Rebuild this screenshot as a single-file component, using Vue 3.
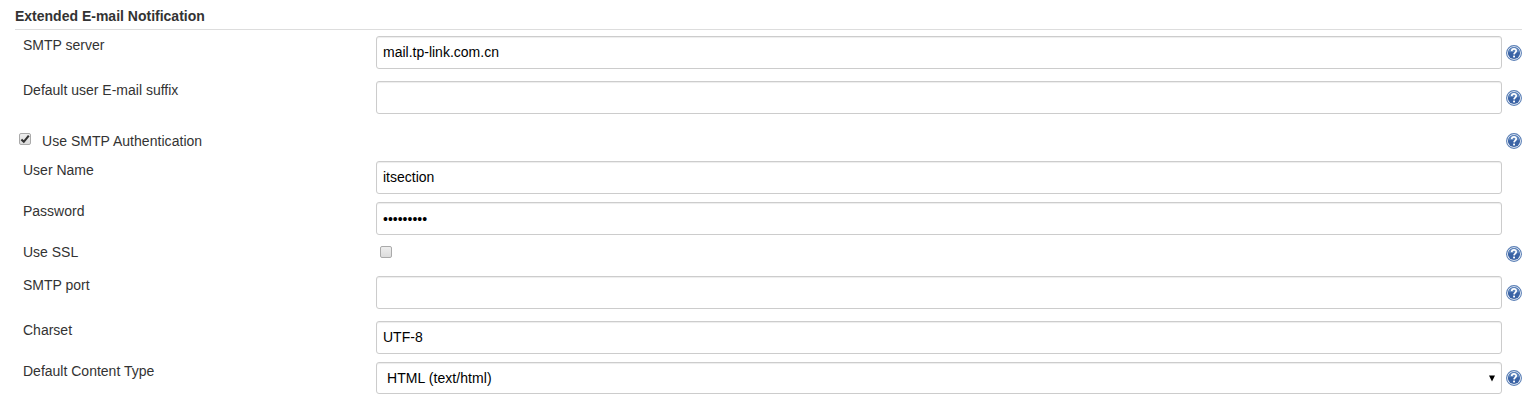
<script setup>
import { reactive } from 'vue'

const rows = reactive([
  { id: 'server', label: 'SMTP server', kind: 'text', value: 'mail.tp-link.com.cn', help: true, size: 'tall' },
  { id: 'suffix', label: 'Default user E-mail suffix', kind: 'text', value: '', help: true, size: 'tall' },
  { id: 'auth', label: 'Use SMTP Authentication', kind: 'inline', value: true, help: true, size: 'auth' },
  { id: 'user', label: 'User Name', kind: 'text', value: 'itsection', size: 'mid' },
  { id: 'password', label: 'Password', kind: 'password', value: '•••••••••', size: 'mid' },
  { id: 'ssl', label: 'Use SSL', kind: 'check', value: false, help: true, size: 'short' },
  { id: 'port', label: 'SMTP port', kind: 'text', value: '', help: true, size: 'tall' },
  { id: 'charset', label: 'Charset', kind: 'text', value: 'UTF-8', size: 'mid' },
  { id: 'type', label: 'Default Content Type', kind: 'select', value: 'HTML (text/html)', help: true, size: 'last' },
])
</script>

<template>
  <main class="section">
    <h1 class="title">Extended E-mail Notification</h1>
    <div v-for="row in rows" :key="row.id" class="row" :class="row.size">
      <div class="label">
        <span v-if="row.kind === 'inline'" class="box" @click="row.value = !row.value">
          <svg v-if="row.value" viewBox="0 0 12 12" width="12" height="12"><path d="M2.4 6.4 4.8 8.8 9.8 2.6" /></svg>
        </span>
        <span class="name">{{ row.label }}</span>
      </div>
      <div class="control">
        <div v-if="row.kind === 'text' || row.kind === 'password'" class="field" :class="row.kind">
          <span>{{ row.value }}</span>
        </div>
        <div v-else-if="row.kind === 'select'" class="field select">
          <span>{{ row.value }}</span>
          <svg class="arrow" viewBox="0 0 6 7" width="6" height="7"><path d="M0 .5h6L3 6.6z" /></svg>
        </div>
        <span v-else-if="row.kind === 'check'" class="box" @click="row.value = !row.value"></span>
      </div>
      <svg v-if="row.help" class="help" viewBox="0 0 16 16" width="16" height="16">
        <circle cx="8" cy="8" r="7.4" fill="#fff" stroke="#5a7fb6" stroke-width="1.1" />
        <circle cx="8" cy="8" r="6.1" fill="#3a63a5" />
        <path d="M2.5 7.5a5.5 5.5 0 0 1 11 0Q8 6 2.5 7.5z" fill="#5f86bd" />
        <path d="M5.7 6.1C5.8 3.2 10.3 3.3 10.2 5.9 10.1 7.6 8.1 7.6 8 9.4" fill="none" stroke="#fff" stroke-width="1.7" />
        <rect x="7.1" y="10.6" width="1.9" height="1.8" fill="#fff" />
      </svg>
    </div>
  </main>
</template>

<style>
body {
  background: #fff;
}
</style>

<style scoped>
.section {
  box-sizing: border-box;
  height: 403px;
  padding: 0 3px 0 15px;
  overflow: hidden;
  color: #333;
  font: 14px/18px "Liberation Sans", Arial, sans-serif;
}
.title {
  box-sizing: border-box;
  height: 30px;
  margin: 0 0 6px;
  padding-top: 7px;
  border-bottom: 1px solid #ddd;
  font-size: 14px;
  line-height: 18px;
}
.row {
  --help-top: 9px;
  display: grid;
  grid-template-columns: 361px 1fr 16px;
  align-items: start;
}
.tall { height: 45px; }
.mid { height: 41px; }
.auth { height: 35px; --help-top: 7px; }
.short { height: 33px; --help-top: 3px; }
.last { height: 41px; --help-top: 8px; }
.label {
  display: flex;
  padding-left: 8px;
  white-space: nowrap;
}
.auth .label {
  padding: 6px 0 0 4px;
  gap: 11px;
  letter-spacing: 0.04px;
}
.control {
  margin-right: 4px;
}
.field {
  box-sizing: border-box;
  display: flex;
  align-items: center;
  height: 33px;
  padding: 0 6px;
  border: 1px solid #ccc;
  border-radius: 3px;
  background: #fff;
  box-shadow: inset 0 1px 1px rgba(0, 0, 0, 0.075);
  color: #000;
  white-space: nowrap;
}
.text {
  padding-bottom: 2px;
}
.select {
  justify-content: space-between;
  height: 32px;
  padding-left: 10px;
  letter-spacing: 0.06px;
}
.arrow {
  fill: #000;
}
.box {
  box-sizing: border-box;
  display: block;
  flex: none;
  width: 12px;
  height: 12px;
  border: 1px solid #aaa;
  border-radius: 2px;
  background: linear-gradient(#eee, #dcdcdc);
}
.box svg {
  display: block;
  margin: -1px;
  fill: none;
  stroke: #333;
  stroke-width: 2.1;
}
.auth .box {
  margin-top: 1px;
}
.control .box {
  margin: 3px 0 0 4px;
}
.help {
  display: block;
  margin-top: var(--help-top);
}
</style>
